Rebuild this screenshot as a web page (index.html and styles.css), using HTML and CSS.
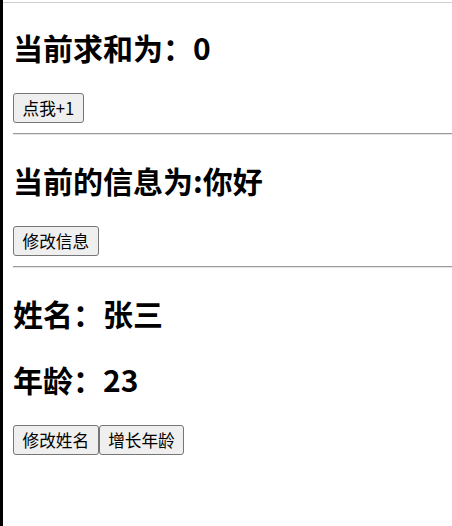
FILE: index.html
```html
<!DOCTYPE html>
<html lang="zh-CN">
<head>
<meta charset="utf-8">
<title>Demo</title>
<link rel="stylesheet" href="styles.css">
</head>
<body>
<div class="frame">
  <div class="top-rule"></div>
  <div class="content">
    <section class="block">
      <h2 class="title first">当前求和为：0</h2>
      <div class="actions"><button class="btn">点我+1</button></div>
    </section>
    <hr class="rule">
    <section class="block">
      <h2 class="title">当前的信息为:你好</h2>
      <div class="actions"><button class="btn">修改信息</button></div>
    </section>
    <hr class="rule">
    <section class="block">
      <h2 class="title">姓名：张三</h2>
      <h2 class="title">年龄：23</h2>
      <div class="actions"><button class="btn">修改姓名</button><button class="btn">增长年龄</button></div>
    </section>
  </div>
</div>
</body>
</html>
```
FILE: styles.css
```css
html, body {
  margin: 0;
  padding: 0;
  background: #fff;
}
body {
  font-family: "Noto Sans CJK SC", "Noto Sans", sans-serif;
  color: #000;
}
.frame {
  border-left: 3px solid #000;
  height: 526px;
  box-sizing: border-box;
  overflow: hidden;
}
.top-rule {
  margin-top: 2px;
  height: 1px;
  background: #d0d0d0;
}
.content {
  padding-left: 10px;
}
.block {
  display: block;
}
.title {
  font-size: 30px;
  line-height: 41px;
  font-weight: 700;
  margin: 25px 0;
}
.title.first {
  margin-top: 24px;
}
.actions {
  display: flex;
  margin: 0;
}
.btn {
  font-family: "Noto Sans CJK SC", "Noto Sans", sans-serif;
  font-size: 16.67px;
  line-height: 22px;
  padding: 3px 8.5px;
  border: 1px solid #767676;
  border-radius: 3px;
  background: #efefef;
  color: #000;
  margin: 0;
}
.rule {
  margin: 10px 0;
  height: 0;
  border: 0;
  border-top: 1px solid #9a9a9a;
  border-bottom: 1px solid #e4e4e4;
}
```
